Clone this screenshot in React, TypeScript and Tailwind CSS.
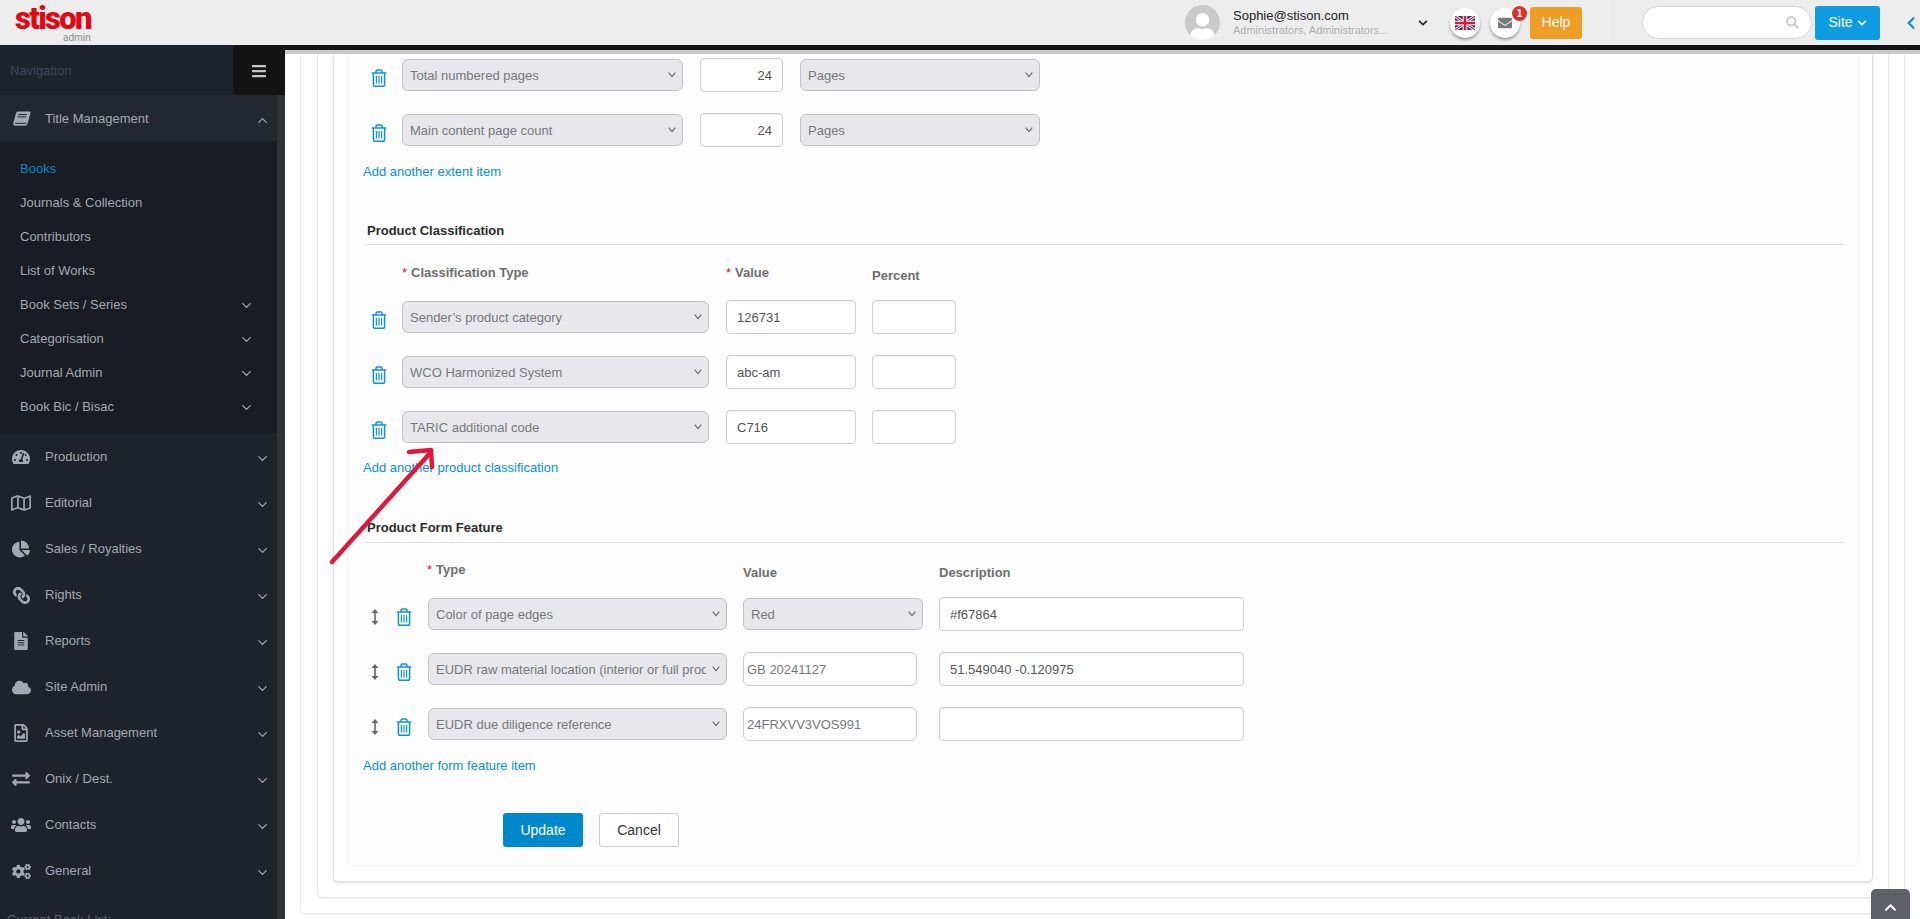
import React from "react";
import {
  FaTachometerAlt, FaRegMap, FaChartPie, FaLink, FaFileAlt, FaCloud, FaRegFileImage,
  FaExchangeAlt, FaUsers, FaCogs, FaEnvelope, FaSearch, FaBars, FaChevronDown, FaChevronLeft,
  FaChevronUp, FaUser,
} from "react-icons/fa";
import { ChevronDown, ChevronUp } from "lucide-react";

function Trash() {
  return (
    <svg width="16" height="18" viewBox="0 0 16 18" fill="none" stroke="#0f92d6" strokeWidth="1.5" className="shrink-0">
      <path d="M0.8 4h14.4" />
      <path d="M5 4V2.2a1.2 1.2 0 0 1 1.2-1.2h3.6A1.2 1.2 0 0 1 11 2.2V4" />
      <path d="M2.4 4v11.8a1.5 1.5 0 0 0 1.5 1.5h8.2a1.5 1.5 0 0 0 1.5-1.5V4" />
      <path d="M5.4 7v7.6M8 7v7.6M10.6 7v7.6" strokeWidth="1.2" />
    </svg>
  );
}

function MoveArrows() {
  return (
    <svg width="8" height="16" viewBox="0 0 8 16" fill="#666">
      <path d="M4 0L7.5 4H4.8v8h2.7L4 16 .5 12h2.7V4H.5z" />
    </svg>
  );
}

function BookIcon() {
  return (
    <svg width="18" height="16" viewBox="0 0 18 16" fill="#a3a9b3">
      <path d="M4.6 0.4h12.2c.7 0 1 .5.8 1.2l-2.9 11c-.3 1.2-1 2.1-2.4 2.1H2.5C1 14.7 0 13.7.3 12.2c.1-.5.3-1.1.4-1.6L3.3 1.6C3.5.8 3.9.4 4.6.4z" />
      <path d="M5.2 3.6h8.6M4.6 5.9h8.6" stroke="#23272f" strokeWidth="1" />
      <path d="M2.2 12.3h11.4" stroke="#23272f" strokeWidth="1" />
    </svg>
  );
}

function Flag() {
  return (
    <svg width="20" height="14" viewBox="0 0 60 42">
      <rect width="60" height="42" rx="3" fill="#1f3f8f" />
      <path d="M0 0l60 42M60 0L0 42" stroke="#fff" strokeWidth="9" />
      <path d="M0 0l60 42M60 0L0 42" stroke="#cf1f33" strokeWidth="3.5" />
      <path d="M30 0v42M0 21h60" stroke="#fff" strokeWidth="14" />
      <path d="M30 0v42M0 21h60" stroke="#cf1f33" strokeWidth="8" />
    </svg>
  );
}

function Select({ value, className }: { value: string; className: string }) {
  return (
    <div className={`relative h-[32px] shrink-0 ${className}`}>
      <select
        defaultValue={value}
        className="h-full w-full appearance-none rounded-[6px] border border-[#c2c2c4] bg-[#e8e8ec] pl-[7px] pr-[20px] pt-[2px] text-[13px] text-[#77777b] outline-none"
      >
        <option>{value}</option>
      </select>
      <svg className="pointer-events-none absolute right-[7px] top-[13px]" width="8" height="6" viewBox="0 0 8 6" fill="none" stroke="#666" strokeWidth="1.1">
        <path d="M0.7 0.7L4 4.6L7.3 0.7" />
      </svg>
    </div>
  );
}

function Input({ value, className }: { value: string; className: string }) {
  return (
    <input
      readOnly
      defaultValue={value}
      className={`h-[34px] shrink-0 rounded-[4px] border border-[#cfcfcf] bg-white text-[13px] text-[#555] shadow-[inset_0_1px_1px_rgba(0,0,0,0.06)] outline-none ${className}`}
    />
  );
}

function AddLink({ children, className }: { children: React.ReactNode; className: string }) {
  return <div className={`ml-[15px] h-[18px] text-[13px] leading-[18px] text-[#0a8fd4] ${className}`}>{children}</div>;
}

function SectionTitle({ children, className }: { children: React.ReactNode; className: string }) {
  return (
    <div className={`ml-[17px] mr-[14px] border-b border-[#e3e3e3] pl-[2px] text-[13px] font-bold leading-[18px] text-[#2b2b2b] ${className}`}>
      {children}
    </div>
  );
}

function Label({ children, req, className }: { children: React.ReactNode; req?: boolean; className: string }) {
  return (
    <div className={`shrink-0 text-[13px] font-bold leading-[18px] text-[#6e6e6e] ${className}`}>
      {req && <span className="mr-[4px] font-normal text-[#e3172a]">*</span>}
      {children}
    </div>
  );
}

const subItems: [string, boolean][] = [
  ["Books", false],
  ["Journals & Collection", false],
  ["Contributors", false],
  ["List of Works", false],
  ["Book Sets / Series", true],
  ["Categorisation", true],
  ["Journal Admin", true],
  ["Book Bic / Bisac", true],
];

const navItems: [string, React.ReactNode][] = [
  ["Production", <FaTachometerAlt size={18} />],
  ["Editorial", <FaRegMap size={20} />],
  ["Sales / Royalties", <FaChartPie size={18} />],
  ["Rights", <FaLink size={17} className="-scale-x-100" />],
  ["Reports", <FaFileAlt size={18} />],
  ["Site Admin", <FaCloud size={19} />],
  ["Asset Management", <FaRegFileImage size={18} />],
  ["Onix / Dest.", <FaExchangeAlt size={18} />],
  ["Contacts", <FaUsers size={20} />],
  ["General", <FaCogs size={19} />],
];

export default function App() {
  return (
    <div className="relative flex h-[919px] w-[1920px] flex-col overflow-hidden bg-white font-['Liberation_Sans',Arial,sans-serif]">
      {/* Top bar */}
      <header className="flex h-[45px] shrink-0 items-center bg-[#ededed]">
        <div className="ml-[15px] flex w-[80px] flex-col items-start pt-[3px]">
          <span className="font-['Roboto',sans-serif] text-[31px] font-black leading-[28px] tracking-[-1.7px] text-[#e30613]">stison</span>
          <span className="ml-[48px] font-['Roboto',sans-serif] text-[10px] leading-[10px] text-[#8b8b8b]">admin</span>
        </div>
        <div className="relative ml-auto flex h-[35px] w-[35px] shrink-0 items-end justify-center overflow-hidden rounded-full bg-[#cacaca]">
          <FaUser size={27} className="text-white" />
        </div>
        <div className="ml-[13px] w-[180px] shrink-0">
          <div className="text-[13px] leading-[16px] text-[#222]">Sophie@stison.com</div>
          <div className="truncate text-[11px] leading-[13px] text-[#adadad]">Administrators, Administrators...</div>
        </div>
        <div className="flex w-[20px] shrink-0 justify-center text-[#222]">
          <FaChevronDown size={10} />
        </div>
        <div className="ml-[17px] flex h-[30px] w-[30px] shrink-0 items-center justify-center rounded-full bg-white shadow-[0_2px_3px_rgba(0,0,0,0.35)]">
          <Flag />
        </div>
        <div className="relative ml-[10px] flex h-[30px] w-[30px] shrink-0 items-center justify-center rounded-full bg-white shadow-[0_2px_3px_rgba(0,0,0,0.35)]">
          <FaEnvelope size={14} className="text-[#7a7a7a]" />
          <span className="absolute left-[22px] top-[-2px] flex h-[15px] w-[15px] items-center justify-center rounded-full bg-[#d8322c] text-[10px] font-bold text-white">1</span>
        </div>
        <div className="ml-[10px] flex h-[32px] w-[52px] shrink-0 items-center justify-center rounded-[3px] bg-[#ee9d27] text-[14px] text-white">Help</div>
        <div className="ml-[30px] h-[40px] w-[1px] shrink-0 self-start bg-[#e4e4e4]" />
        <div className="ml-[29px] flex h-[33px] w-[170px] shrink-0 items-center justify-end rounded-full border border-[#d5d5d5] bg-white pr-[12px]">
          <FaSearch size={13} className="text-[#cfcfcf]" />
        </div>
        <div className="ml-[3px] flex h-[34px] w-[65px] shrink-0 items-center justify-center gap-[4px] rounded-[3px] bg-[#0e9be2] text-[14px] text-white">
          Site <FaChevronDown size={10} />
        </div>
        <div className="ml-[25px] mr-[3px] flex w-[12px] shrink-0 justify-center text-[#0e8fd6]">
          <FaChevronLeft size={14} />
        </div>
      </header>

      <div className="flex min-h-0 flex-1">
        {/* Sidebar */}
        <aside className="flex w-[285px] shrink-0 flex-col overflow-hidden bg-[#2e323a]">
          <div className="flex h-[50px] shrink-0 items-start bg-[#1e222a]">
            <span className="ml-[10px] mt-[17px] text-[13px] leading-[18px] text-[#3f4856]">Navigation</span>
            <div className="ml-auto flex h-[50px] w-[52px] items-center justify-center rounded-bl-[5px] bg-[#141414] pt-[2px] text-[#c4c4c4]">
              <FaBars size={16} />
            </div>
          </div>
          <div className="w-[277px]">
            <div className="flex h-[46px] items-center bg-[#23272f] pt-[2px] text-[13px] text-[#a3a9b3]">
              <span className="flex w-[45px] shrink-0 justify-center pl-[4px] pr-[5px]"><BookIcon /></span>
              <span>Title Management</span>
              <ChevronUp size={15} strokeWidth={2} className="ml-auto mr-[7px] mt-[3px]" />
            </div>
            <div className="bg-[#191c22] py-[10px]">
              {subItems.map(([t, c], i) => (
                <div key={t} className={`flex h-[34px] items-center pl-[20px] pr-[23px] pt-[2px] text-[13px] ${i === 0 ? "text-[#0a87c9]" : "text-[#a3a9b3]"}`}>
                  <span>{t}</span>
                  {c && <ChevronDown size={15} strokeWidth={2} className="ml-auto" />}
                </div>
              ))}
            </div>
            <div className="bg-[#1e222a] pb-[18px]">
              {navItems.map(([t, ic]) => (
                <div key={t} className="flex h-[46px] items-center pt-[2px] text-[13px] text-[#a3a9b3]">
                  <span className="flex w-[45px] shrink-0 justify-center pl-[4px] pr-[7px]">{ic}</span>
                  <span>{t}</span>
                  <ChevronDown size={15} strokeWidth={2} className="ml-auto mr-[7px] mt-[3px]" />
                </div>
              ))}
              <div className="mt-[18px] pl-[7px] text-[13px] leading-[18px] text-[#5a6270]">Current Book List:</div>
            </div>
          </div>
        </aside>

        {/* Main */}
        <main className="min-w-0 flex-1 overflow-hidden">
          <div className="h-[5px] bg-[#141414]" />
          <div className="h-[4px] bg-[#c9c9c9]" />
          <div className="pl-[15px] pr-[15px]">
            <div className="rounded-b-[5px] border-x border-b border-[#e8e8e8] px-[15px] pb-[15px] pl-[16px] shadow-[0_1px_2px_rgba(0,0,0,0.06)]">
              <div className="rounded-b-[5px] border-x border-b border-[#e4e4e4] px-[15px] pb-[15px] shadow-[0_1px_2px_rgba(0,0,0,0.06)]">
                <div className="rounded-b-[5px] border-x border-b border-[#dedede] pb-[14px] pl-[13px] pr-[13px] shadow-[0_1px_3px_rgba(0,0,0,0.12)]">
                  <div className="rounded-b-[5px] border-x border-b border-[#f5f5f5] bg-[#fdfdfd] pb-[19px] pt-[4px]">
                    {/* Extent rows */}
                    {[
                      "Total numbered pages",
                      "Main content page count",
                    ].map((t, i) => (
                      <div key={t} className={`flex h-[34px] items-center pl-[23px] ${i ? "mt-[21px]" : ""}`}>
                        <span className="mt-[5px] w-[31px] shrink-0"><Trash /></span>
                        <Select value={t} className="w-[281px]" />
                        <Input value="24" className="ml-[17px] w-[83px] pr-[10px] text-right" />
                        <Select value="Pages" className="ml-[17px] w-[240px]" />
                      </div>
                    ))}
                    <AddLink className="mt-[16px]">Add another extent item</AddLink>

                    {/* Product Classification */}
                    <SectionTitle className="mt-[41px] pb-[4px]">Product Classification</SectionTitle>
                    <div className="flex h-[55px] pl-[54px]">
                      <Label req className="w-[324px] pt-[19px]">Classification Type</Label>
                      <Label req className="w-[146px] pt-[19px]">Value</Label>
                      <Label className="pt-[22px]">Percent</Label>
                    </div>
                    {[
                      ["Sender\u2019s product category", "126731"],
                      ["WCO Harmonized System", "abc-am"],
                      ["TARIC additional code", "C716"],
                    ].map(([t, v], i) => (
                      <div key={t} className={`flex h-[34px] items-center pl-[23px] ${i ? "mt-[21px]" : ""}`}>
                        <span className="mt-[5px] w-[31px] shrink-0"><Trash /></span>
                        <Select value={t} className="w-[307px]" />
                        <Input value={v} className="ml-[17px] w-[130px] px-[10px]" />
                        <Input value="" className="ml-[16px] w-[84px] px-[10px]" />
                      </div>
                    ))}
                    <AddLink className="mt-[15px]">Add another product classification</AddLink>

                    {/* Product Form Feature */}
                    <SectionTitle className="mt-[42px] pb-[5px]">Product Form Feature</SectionTitle>
                    <div className="flex h-[54px] pl-[79px]">
                      <Label req className="w-[316px] pt-[18px]">Type</Label>
                      <Label className="w-[196px] pt-[21px]">Value</Label>
                      <Label className="pt-[21px]">Description</Label>
                    </div>
                    {[
                      ["Color of page edges", null, "#f67864"],
                      ["EUDR raw material location (interior or full product)", "GB 20241127", "51.549040 -0.120975"],
                      ["EUDR due diligence reference", "24FRXVV3VOS991", ""],
                    ].map(([t, v, d], i) => (
                      <div key={t as string} className={`flex h-[34px] items-center pl-[23px] ${i ? "mt-[21px]" : ""}`}>
                        <span className="mt-[5px] flex w-[25px] shrink-0"><MoveArrows /></span>
                        <span className="mt-[5px] w-[32px] shrink-0"><Trash /></span>
                        <Select value={t as string} className="w-[299px]" />
                        {v === null ? (
                          <>
                            <Select value="Red" className="ml-[16px] w-[180px]" />
                            <Input value={d as string} className="ml-[16px] w-[305px] px-[10px]" />
                          </>
                        ) : (
                          <>
                            <Input value={v as string} className="ml-[16px] h-[32px] w-[174px] rounded-[6px] border-[#c8c8c8] pl-[3px] text-[#77777b]" />
                            <Input value={d as string} className="ml-[22px] w-[305px] px-[10px]" />
                          </>
                        )}
                      </div>
                    ))}
                    <AddLink className="mt-[16px]">Add another form feature item</AddLink>

                    <div className="ml-[155px] mt-[38px] flex gap-[16px]">
                      <button className="flex h-[34px] w-[80px] items-center justify-center rounded-[3px] bg-[#0088cc] text-[14px] text-white">Update</button>
                      <button className="flex h-[34px] w-[80px] items-center justify-center rounded-[3px] border border-[#cfcfcf] bg-white text-[14px] text-[#333]">Cancel</button>
                    </div>
                  </div>
                </div>
              </div>
            </div>
          </div>
        </main>
      </div>

      {/* Annotation arrow */}
      <svg className="pointer-events-none absolute left-[325px] top-[440px]" width="125" height="130" viewBox="325 440 125 130" fill="none">
        <path d="M332 562L431 452" stroke="#e0173a" strokeWidth="4.4" strokeLinecap="round" />
        <path d="M409 452L431 450L432 467" stroke="#e0173a" strokeWidth="4.4" strokeLinecap="round" strokeLinejoin="round" />
      </svg>

      {/* Scroll-to-top tile */}
      <div className="absolute bottom-0 left-[1871px] flex h-[30px] w-[39px] items-center justify-center rounded-t-[5px] bg-[#4c5058]/90 text-white">
        <FaChevronUp size={13} className="mt-[6px]" />
      </div>
    </div>
  );
}
